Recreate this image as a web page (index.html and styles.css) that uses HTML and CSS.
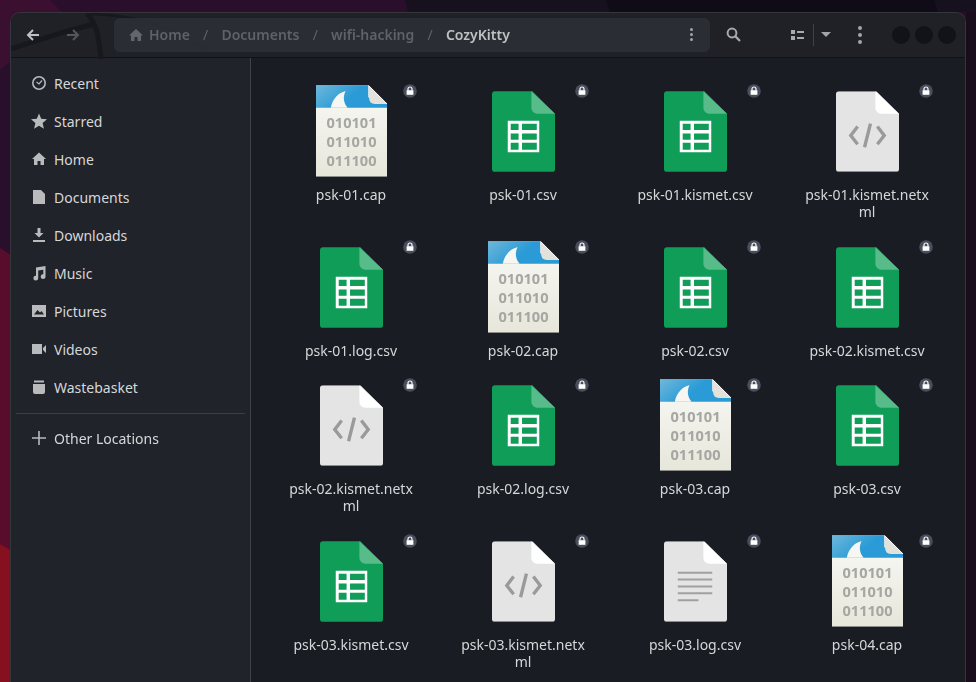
FILE: index.html
```html
<!DOCTYPE html>
<html lang="en">
<head>
    <meta charset="UTF-8">
    <meta name="viewport" content="width=device-width, initial-scale=1.0">
    <title>CozyKitty</title>
    <link rel="stylesheet" href="styles.css">
</head>
<body>
    <svg class="wallpaper" viewBox="0 0 976 682" aria-hidden="true">
        <rect width="976" height="682" fill="#2a0f2c"/>
        <polygon points="0,0 50,0 62,12 12,60 0,70" fill="#3a0f30"/>
        <polygon points="405,0 976,0 976,12 408,12" fill="#17101f"/>
        <polygon points="606,0 934,0 938,12 610,12" fill="#0f0c18"/>
        <polygon points="0,248 12,256 12,552 0,544" fill="#590d2c"/>
        <polygon points="0,544 12,551 12,682 0,682" fill="#86101f"/>
        <polygon points="966,12 976,12 976,682 966,682" fill="#190d1c"/>
    </svg>

    <svg class="defs" aria-hidden="true">
        <defs>
            <linearGradient id="cap-blue" x1="0" y1="0" x2="1" y2="0.4">
                <stop offset="0" stop-color="#6fb8da"/>
                <stop offset="0.6" stop-color="#2a9bd6"/>
            </linearGradient>
            <linearGradient id="cap-paper" x1="0" y1="0" x2="0" y2="1">
                <stop offset="0" stop-color="#fafaf7"/>
                <stop offset="1" stop-color="#e6e6da"/>
            </linearGradient>
        </defs>
        <symbol id="page-green" viewBox="0 0 64 82">
            <path d="M3 0H41L64 23V79a3 3 0 0 1-3 3H3a3 3 0 0 1-3-3V3a3 3 0 0 1 3-3Z" fill="#0f9d58"/>
            <path d="M40 0L64 23H46a6 6 0 0 1-6-6Z" fill="#57bb8a"/>
            <path d="M16 30H48V62H16Z" fill="#fff"/>
            <path d="M19 33H27V39.500H19ZM30.500 33H45.500V39.500H30.500ZM19 43H27V49.500H19ZM30.500 43H45.500V49.500H30.500ZM19 52.500H27V59.500H19ZM30.500 52.500H45.500V59.500H30.500Z" fill="#0f9d58"/>
        </symbol>
        <symbol id="page-grey" viewBox="0 0 64 82">
            <path d="M3 0H41L64 23V79a3 3 0 0 1-3 3H3a3 3 0 0 1-3-3V3a3 3 0 0 1 3-3Z" fill="#e4e4e4"/>
            <path d="M40 0L64 23H46a6 6 0 0 1-6-6Z" fill="#fff"/>
        </symbol>
        <symbol id="code" viewBox="0 0 64 82">
            <use href="#page-grey" width="64" height="82"/>
            <path d="M22 36L15 45L22 54M42 36L49 45L42 54M35 33L29 57" fill="none" stroke="#9a9a9a" stroke-width="3.400"/>
        </symbol>
        <symbol id="text" viewBox="0 0 64 82">
            <use href="#page-grey" width="64" height="82"/>
            <path d="M14 32H49M14 39H49M14 46H49M14 53H49M14 60H35" stroke="#a0a0a0" stroke-width="2"/>
        </symbol>
        <symbol id="cap" viewBox="0 0 72 93">
            <path d="M0 0H53L72 19V93H0Z" fill="url(#cap-paper)"/>
            <path d="M0 0H53V12L60 19L72 19V23H0Z" fill="url(#cap-blue)"/>
            <path d="M15 23C17 13 23 8 30 6C27 12 28 18 32 23Z" fill="#f6f6f2"/>
            <path d="M53 0L72 19H60C56 19 54 17 54 13Z" fill="#e2e2da"/>
            <path d="M53 0L72 19" stroke="#fff" stroke-width="1"/>
        </symbol>
        <symbol id="lock" viewBox="0 0 14 14">
            <circle cx="7" cy="7" r="6.800" fill="#4a4d5c"/>
            <path d="M3.600 6.200H10.400V10.800H3.600Z" fill="#fff"/>
            <path d="M5 6.400V5a2 2 0 0 1 4 0V6.400" fill="none" stroke="#fff" stroke-width="1.200"/>
        </symbol>
    </svg>

    <div class="window">
        <header class="headerbar">
            <svg class="dragon" viewBox="0 0 220 46" aria-hidden="true">
                <path d="M0 36C30 26 60 16 84 11" fill="none" stroke="#17181d" stroke-width="5"/>
                <path d="M76 0C88 14 88 30 90 46" fill="none" stroke="#17181d" stroke-width="5"/>
                <path d="M80 1C110 2 150 8 176 26L197 37" fill="none" stroke="#17181d" stroke-width="2.500"/>
            </svg>
            <div class="nav-buttons">
                <svg class="nav-icon" viewBox="0 0 14 14"><path d="M13 7H2.500M7 2L2 7L7 12" fill="none" stroke="#c0c1c3" stroke-width="2"/></svg>
                <svg class="nav-icon" viewBox="0 0 14 14"><path d="M1 7H11.500M7 2L12 7L7 12" fill="none" stroke="#53565b" stroke-width="2"/></svg>
            </div>
            <nav class="pathbar">
                <svg class="path-home" viewBox="0 0 14 14"><path d="M7 1L14 7.500H12V13H8.500V9H5.500V13H2V7.500H0Z" fill="#63666b"/></svg>
                <span class="crumb">Home</span>
                <span class="sep">/</span>
                <span class="crumb">Documents</span>
                <span class="sep">/</span>
                <span class="crumb">wifi-hacking</span>
                <span class="sep">/</span>
                <span class="crumb current">CozyKitty</span>
                <span class="path-menu"><i></i><i></i><i></i></span>
            </nav>
            <svg class="search-icon" viewBox="0 0 15 15"><circle cx="6" cy="6" r="4.400" fill="none" stroke="#a9aaac" stroke-width="2"/><path d="M9.400 9.400L14 14" stroke="#a9aaac" stroke-width="2.200"/></svg>
            <div class="view-switch">
                <svg class="list-icon" viewBox="0 0 13 10"><path d="M0 0H4V4H0ZM0 6H4V10H0ZM6 1H13V3H6ZM6 7H13V9H6Z" fill="#a9aaac"/></svg>
                <span class="view-sep"></span>
                <span class="caret"></span>
            </div>
            <span class="kebab"><i></i><i></i><i></i></span>
            <div class="win-controls"><i></i><i></i><i></i></div>
        </header>

        <div class="content">
            <aside class="sidebar">
                <ul class="places">
                    <li>
                        <svg viewBox="0 0 16 16"><circle cx="8" cy="8" r="6.200" fill="none" stroke="#b9babc" stroke-width="1.600"/><path d="M5.500 7L8 9L11 5.500" fill="none" stroke="#b9babc" stroke-width="1.200"/></svg>
                        Recent
                    </li>
                    <li>
                        <svg viewBox="0 0 16 16"><path d="M8 0.500L10.200 5.800L16 6.300L11.600 10.100L12.900 15.700L8 12.800L3.100 15.700L4.400 10.100L0 6.300L5.800 5.800Z" fill="#b9babc"/></svg>
                        Starred
                    </li>
                    <li>
                        <svg viewBox="0 0 16 16"><path d="M8 1.500L15 8H13V14H9.500V10H6.500V14H3V8H1Z" fill="#b9babc"/></svg>
                        Home
                    </li>
                    <li>
                        <svg viewBox="0 0 16 16"><path d="M2 1H10L14 5V15H2Z" fill="#b9babc"/></svg>
                        Documents
                    </li>
                    <li>
                        <svg viewBox="0 0 16 16"><path d="M6.500 1H9.500V6H12.500L8 10.500L3.500 6H6.500ZM2 13H14V15H2Z" fill="#b9babc"/></svg>
                        Downloads
                    </li>
                    <li>
                        <svg viewBox="0 0 16 16"><path d="M5 2.500L14.500 1V11.500a2.400 2.400 0 1 1-2.200-2.300V4.800L7.200 5.600V13a2.400 2.400 0 1 1-2.200-2.300Z" fill="#b9babc"/></svg>
                        Music
                    </li>
                    <li>
                        <svg viewBox="0 0 16 16"><path d="M1 2H15V14H1ZM3 11.500H13L10.500 8L9 9.500L6.500 7Z" fill="#b9babc" fill-rule="evenodd"/></svg>
                        Pictures
                    </li>
                    <li>
                        <svg viewBox="0 0 16 16"><path d="M1 3H11V13H1ZM12 7L15 4V12L12 9Z" fill="#b9babc"/></svg>
                        Videos
                    </li>
                    <li>
                        <svg viewBox="0 0 16 16"><path d="M3 1.500H13V3.500H3ZM2 5H14V13a2 2 0 0 1-2 2H4a2 2 0 0 1-2-2Z" fill="#b9babc"/></svg>
                        Wastebasket
                    </li>
                </ul>
                <div class="sidebar-sep"></div>
                <ul class="places places-other">
                    <li>
                        <svg viewBox="0 0 16 16"><path d="M1 8H15M8 1V15" stroke="#b9babc" stroke-width="1.600"/></svg>
                        Other Locations
                    </li>
                </ul>
            </aside>

            <main class="files">
                <div class="file"><div class="thumb"><svg class="ic-cap" viewBox="0 0 72 93"><use href="#cap"/><text x="36" y="43" class="bits">010101</text><text x="36" y="63" class="bits">011010</text><text x="36" y="82" class="bits">011100</text></svg><svg class="lock"><use href="#lock"/></svg></div><div class="name">psk-01.cap</div></div>
                <div class="file"><div class="thumb"><svg class="ic"><use href="#page-green"/></svg><svg class="lock"><use href="#lock"/></svg></div><div class="name">psk-01.csv</div></div>
                <div class="file"><div class="thumb"><svg class="ic"><use href="#page-green"/></svg><svg class="lock"><use href="#lock"/></svg></div><div class="name">psk-01.kismet.csv</div></div>
                <div class="file"><div class="thumb"><svg class="ic"><use href="#code"/></svg><svg class="lock"><use href="#lock"/></svg></div><div class="name">psk-01.kismet.netx<br>ml</div></div>

                <div class="file"><div class="thumb"><svg class="ic"><use href="#page-green"/></svg><svg class="lock"><use href="#lock"/></svg></div><div class="name">psk-01.log.csv</div></div>
                <div class="file"><div class="thumb"><svg class="ic-cap" viewBox="0 0 72 93"><use href="#cap"/><text x="36" y="43" class="bits">010101</text><text x="36" y="63" class="bits">011010</text><text x="36" y="82" class="bits">011100</text></svg><svg class="lock"><use href="#lock"/></svg></div><div class="name">psk-02.cap</div></div>
                <div class="file"><div class="thumb"><svg class="ic"><use href="#page-green"/></svg><svg class="lock"><use href="#lock"/></svg></div><div class="name">psk-02.csv</div></div>
                <div class="file"><div class="thumb"><svg class="ic"><use href="#page-green"/></svg><svg class="lock"><use href="#lock"/></svg></div><div class="name">psk-02.kismet.csv</div></div>

                <div class="file"><div class="thumb"><svg class="ic"><use href="#code"/></svg><svg class="lock"><use href="#lock"/></svg></div><div class="name">psk-02.kismet.netx<br>ml</div></div>
                <div class="file"><div class="thumb"><svg class="ic"><use href="#page-green"/></svg><svg class="lock"><use href="#lock"/></svg></div><div class="name">psk-02.log.csv</div></div>
                <div class="file"><div class="thumb"><svg class="ic-cap" viewBox="0 0 72 93"><use href="#cap"/><text x="36" y="43" class="bits">010101</text><text x="36" y="63" class="bits">011010</text><text x="36" y="82" class="bits">011100</text></svg><svg class="lock"><use href="#lock"/></svg></div><div class="name">psk-03.cap</div></div>
                <div class="file"><div class="thumb"><svg class="ic"><use href="#page-green"/></svg><svg class="lock"><use href="#lock"/></svg></div><div class="name">psk-03.csv</div></div>

                <div class="file"><div class="thumb"><svg class="ic"><use href="#page-green"/></svg><svg class="lock"><use href="#lock"/></svg></div><div class="name">psk-03.kismet.csv</div></div>
                <div class="file"><div class="thumb"><svg class="ic"><use href="#code"/></svg><svg class="lock"><use href="#lock"/></svg></div><div class="name">psk-03.kismet.netx<br>ml</div></div>
                <div class="file"><div class="thumb"><svg class="ic"><use href="#text"/></svg><svg class="lock"><use href="#lock"/></svg></div><div class="name">psk-03.log.csv</div></div>
                <div class="file"><div class="thumb"><svg class="ic-cap" viewBox="0 0 72 93"><use href="#cap"/><text x="36" y="43" class="bits">010101</text><text x="36" y="63" class="bits">011010</text><text x="36" y="82" class="bits">011100</text></svg><svg class="lock"><use href="#lock"/></svg></div><div class="name">psk-04.cap</div></div>
            </main>
        </div>
    </div>
</body>
</html>
```

FILE: styles.css
```css
html, body {
    height: 100%;
}
body {
    margin: 0;
    padding: 12px 10px 0;
    box-sizing: border-box;
    overflow: hidden;
    font-family: "Noto Sans", sans-serif;
    font-size: 14px;
    background: #2a0f2c;
}
.wallpaper {
    position: fixed;
    left: 0;
    top: 0;
    width: 976px;
    height: 682px;
}
.defs {
    position: absolute;
    width: 0;
    height: 0;
}
.bits {
    font-family: "Noto Sans", sans-serif;
    font-size: 14.8px;
    font-weight: bold;
    fill: #a6a6a2;
    text-anchor: middle;
}
.window {
    position: relative;
    height: 100%;
    display: flex;
    flex-direction: column;
    border: 1px solid #34363b;
    border-bottom: 0;
    border-radius: 10px 10px 0 0;
    overflow: hidden;
    background: #1a1c23;
}

/* header */
.headerbar {
    position: relative;
    z-index: 0;
    height: 45px;
    padding-bottom: 1px;
    flex: none;
    display: flex;
    align-items: center;
    background: #1f2127;
    border-bottom: 1px solid #111217;
    box-sizing: border-box;
}
.dragon {
    position: absolute;
    z-index: -1;
    left: 0;
    top: 0;
    width: 220px;
    height: 46px;
}
.nav-buttons {
    display: flex;
    gap: 26px;
    padding-left: 15px;
    width: 103px;
    flex: none;
    box-sizing: border-box;
}
.nav-icon {
    width: 14px;
    height: 14px;
}
.pathbar {
    width: 596px;
    height: 34px;
    flex: none;
    display: flex;
    align-items: center;
    background: rgba(44, 47, 54, 0.9);
    border-radius: 6px;
    padding-left: 15px;
    box-sizing: border-box;
    color: #5f6266;
    font-weight: 600;
}
.path-home {
    width: 14px;
    height: 14px;
    margin-right: 6px;
}
.sep {
    margin: 0 13.2px;
    font-weight: 400;
}
.current {
    color: #c0c1c3;
}
.path-menu {
    margin-left: auto;
    margin-right: 17px;
    display: flex;
    flex-direction: column;
    gap: 2px;
}
.path-menu i, .kebab i {
    display: block;
    border-radius: 50%;
    background: #a3a4a6;
}
.path-menu i {
    width: 3px;
    height: 3px;
}
.search-icon {
    width: 15px;
    height: 15px;
    margin-left: 16px;
}
.view-switch {
    display: flex;
    align-items: center;
    margin-left: 50px;
}
.list-icon {
    width: 13px;
    height: 10px;
}
.view-sep {
    width: 1px;
    height: 22px;
    background: #3f4147;
    margin: 0 7px 0 9px;
}
.caret {
    width: 0;
    height: 0;
    border-left: 5px solid transparent;
    border-right: 5px solid transparent;
    border-top: 5px solid #a3a4a6;
}
.kebab {
    margin-left: 27px;
    display: flex;
    flex-direction: column;
    gap: 3px;
}
.kebab i {
    width: 4px;
    height: 4px;
}
.win-controls {
    margin-left: auto;
    margin-right: 9px;
    display: flex;
    gap: 5px;
}
.win-controls i {
    width: 18px;
    height: 18px;
    border-radius: 50%;
    background: #121318;
}

/* body */
.content {
    flex: 1;
    display: flex;
    min-height: 0;
}
.sidebar {
    width: 239px;
    flex: none;
    background: #20232a;
    border-right: 1px solid #404247;
    color: #d6d7d8;
}
.places {
    list-style: none;
    margin: 0;
    padding: 6px 0 0;
}
.places li {
    height: 38px;
    display: flex;
    align-items: center;
    gap: 7px;
    padding-left: 20px;
}
.places svg {
    width: 16px;
    height: 16px;
    flex: none;
}
.sidebar-sep {
    height: 1px;
    margin: 7px 5px 0;
    background: #3c3e43;
}
.places-other {
    padding-top: 5px;
}
.files {
    flex: 1;
    display: grid;
    grid-template-columns: repeat(4, 172px);
    grid-template-rows: 156px 138px 156px 156px;
    padding: 18px 0 0 14px;
    min-width: 0;
}
.file {
    display: flex;
    flex-direction: column;
    align-items: center;
}
.thumb {
    position: relative;
    width: 96px;
    height: 96px;
    flex: none;
    display: flex;
    align-items: flex-end;
    justify-content: center;
}
.ic {
    width: 63px;
    height: 81px;
}
.ic-cap {
    width: 71px;
    height: 92px;
    margin-bottom: -5px;
}
.lock {
    position: absolute;
    top: 8px;
    left: 100px;
    width: 14px;
    height: 14px;
}
.name {
    margin-top: 14px;
    width: 130px;
    text-align: center;
    line-height: 17px;
    color: #d6d7d8;
}
```
